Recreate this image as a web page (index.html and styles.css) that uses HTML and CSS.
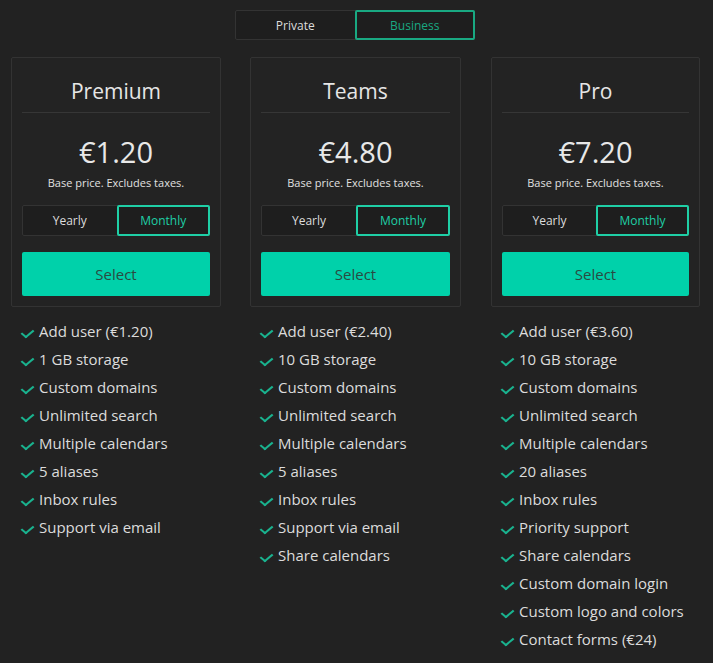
FILE: index.html
```html
<!DOCTYPE html>
<html lang="en">
<head>
<meta charset="utf-8">
<title>Pricing</title>
<link rel="stylesheet" href="styles.css">
</head>
<body>
<div class="top">
  <div class="seg seg-main">
    <button class="seg-btn">Private</button>
    <button class="seg-btn active">Business</button>
  </div>
</div>
<div class="plans">
  <div class="plan">
    <div class="card">
      <div class="name">Premium</div>
      <div class="price">€1.20</div>
      <div class="note">Base price. Excludes taxes.</div>
      <div class="seg seg-period">
        <button class="seg-btn">Yearly</button>
        <button class="seg-btn active">Monthly</button>
      </div>
      <button class="select">Select</button>
    </div>
    <ul class="features">
      <li>Add user (€1.20)</li>
      <li>1 GB storage</li>
      <li>Custom domains</li>
      <li>Unlimited search</li>
      <li>Multiple calendars</li>
      <li>5 aliases</li>
      <li>Inbox rules</li>
      <li>Support via email</li>
    </ul>
  </div>
  <div class="plan">
    <div class="card">
      <div class="name">Teams</div>
      <div class="price">€4.80</div>
      <div class="note">Base price. Excludes taxes.</div>
      <div class="seg seg-period">
        <button class="seg-btn">Yearly</button>
        <button class="seg-btn active">Monthly</button>
      </div>
      <button class="select">Select</button>
    </div>
    <ul class="features">
      <li>Add user (€2.40)</li>
      <li>10 GB storage</li>
      <li>Custom domains</li>
      <li>Unlimited search</li>
      <li>Multiple calendars</li>
      <li>5 aliases</li>
      <li>Inbox rules</li>
      <li>Support via email</li>
      <li>Share calendars</li>
    </ul>
  </div>
  <div class="plan">
    <div class="card">
      <div class="name">Pro</div>
      <div class="price">€7.20</div>
      <div class="note">Base price. Excludes taxes.</div>
      <div class="seg seg-period">
        <button class="seg-btn">Yearly</button>
        <button class="seg-btn active">Monthly</button>
      </div>
      <button class="select">Select</button>
    </div>
    <ul class="features">
      <li>Add user (€3.60)</li>
      <li>10 GB storage</li>
      <li>Custom domains</li>
      <li>Unlimited search</li>
      <li>Multiple calendars</li>
      <li>20 aliases</li>
      <li>Inbox rules</li>
      <li>Priority support</li>
      <li>Share calendars</li>
      <li>Custom domain login</li>
      <li>Custom logo and colors</li>
      <li>Contact forms (€24)</li>
    </ul>
  </div>
</div>
</body>
</html>
```
FILE: styles.css
```css
* { box-sizing: border-box; }
html, body { margin: 0; background: #222222; }
body {
  font-family: "Open Sans", "Noto Sans", "DejaVu Sans", sans-serif;
  color: #dddddd;
  width: 713px;
  height: 663px;
  overflow: hidden;
}
button { font-family: inherit; cursor: pointer; }
.top {
  display: flex;
  justify-content: center;
  padding-top: 10px;
}
.seg {
  display: flex;
  border: 1px solid #333333;
  border-radius: 2px;
  background: #1e1e1e;
}
.seg-main { width: 240px; height: 30px; margin-right: 4px; }
.seg-btn {
  flex: 1;
  background: transparent;
  border: 2px solid transparent;
  color: #dddddd;
  font-size: 12px;
  padding: 0;
  margin: -1px 0;
  border-radius: 2px;
}
.seg-btn.active { color: #1fcfa6; border-color: #1fcfa6; margin-right: -1px; }
.seg-main .seg-btn.active { color: #19a982; border-color: #19a982; }
.plans {
  display: grid;
  grid-template-columns: 210px 211px 210px;
  column-gap: 29px;
  padding-left: 11px;
  margin-top: 17px;
  align-items: start;
}
.plan:last-child { margin-left: 1px; }
.card {
  border: 1px solid #333333;
  border-radius: 2px;
  padding: 0 10px 10px;
  display: flex;
  flex-direction: column;
  background: #232323;
}
.name {
  height: 55px;
  border-bottom: 1px solid #363636;
  text-align: center;
  font-size: 21px;
  line-height: 22px;
  padding-top: 22px;
  color: #e6e6e6;
}
.price {
  text-align: center;
  font-size: 29px;
  line-height: 34px;
  margin-top: 22px;
  color: #e8e8e8;
}
.note {
  text-align: center;
  font-size: 11px;
  line-height: 16px;
  margin-top: 6px;
  color: #e0e0e0;
}
.seg-period { height: 31px; margin-top: 14px; }
.select {
  margin-top: 16px;
  height: 44px;
  border: none;
  border-radius: 2px;
  background: #00d1aa;
  color: #2a4a42;
  font-size: 15px;
}
.features {
  list-style: none;
  margin: 10px 0 0;
  padding: 0 0 0 11px;
}
.features li {
  position: relative;
  padding-left: 17px;
  font-size: 15px;
  line-height: 28px;
  white-space: nowrap;
  color: #dcdcdc;
}
.features li::before {
  content: "";
  position: absolute;
  left: 2px;
  top: 10px;
  width: 5px;
  height: 9px;
  border-right: 2px solid #1ab38f;
  border-bottom: 2px solid #1ab38f;
  transform: rotate(40deg) skewX(-10deg);
}
```
